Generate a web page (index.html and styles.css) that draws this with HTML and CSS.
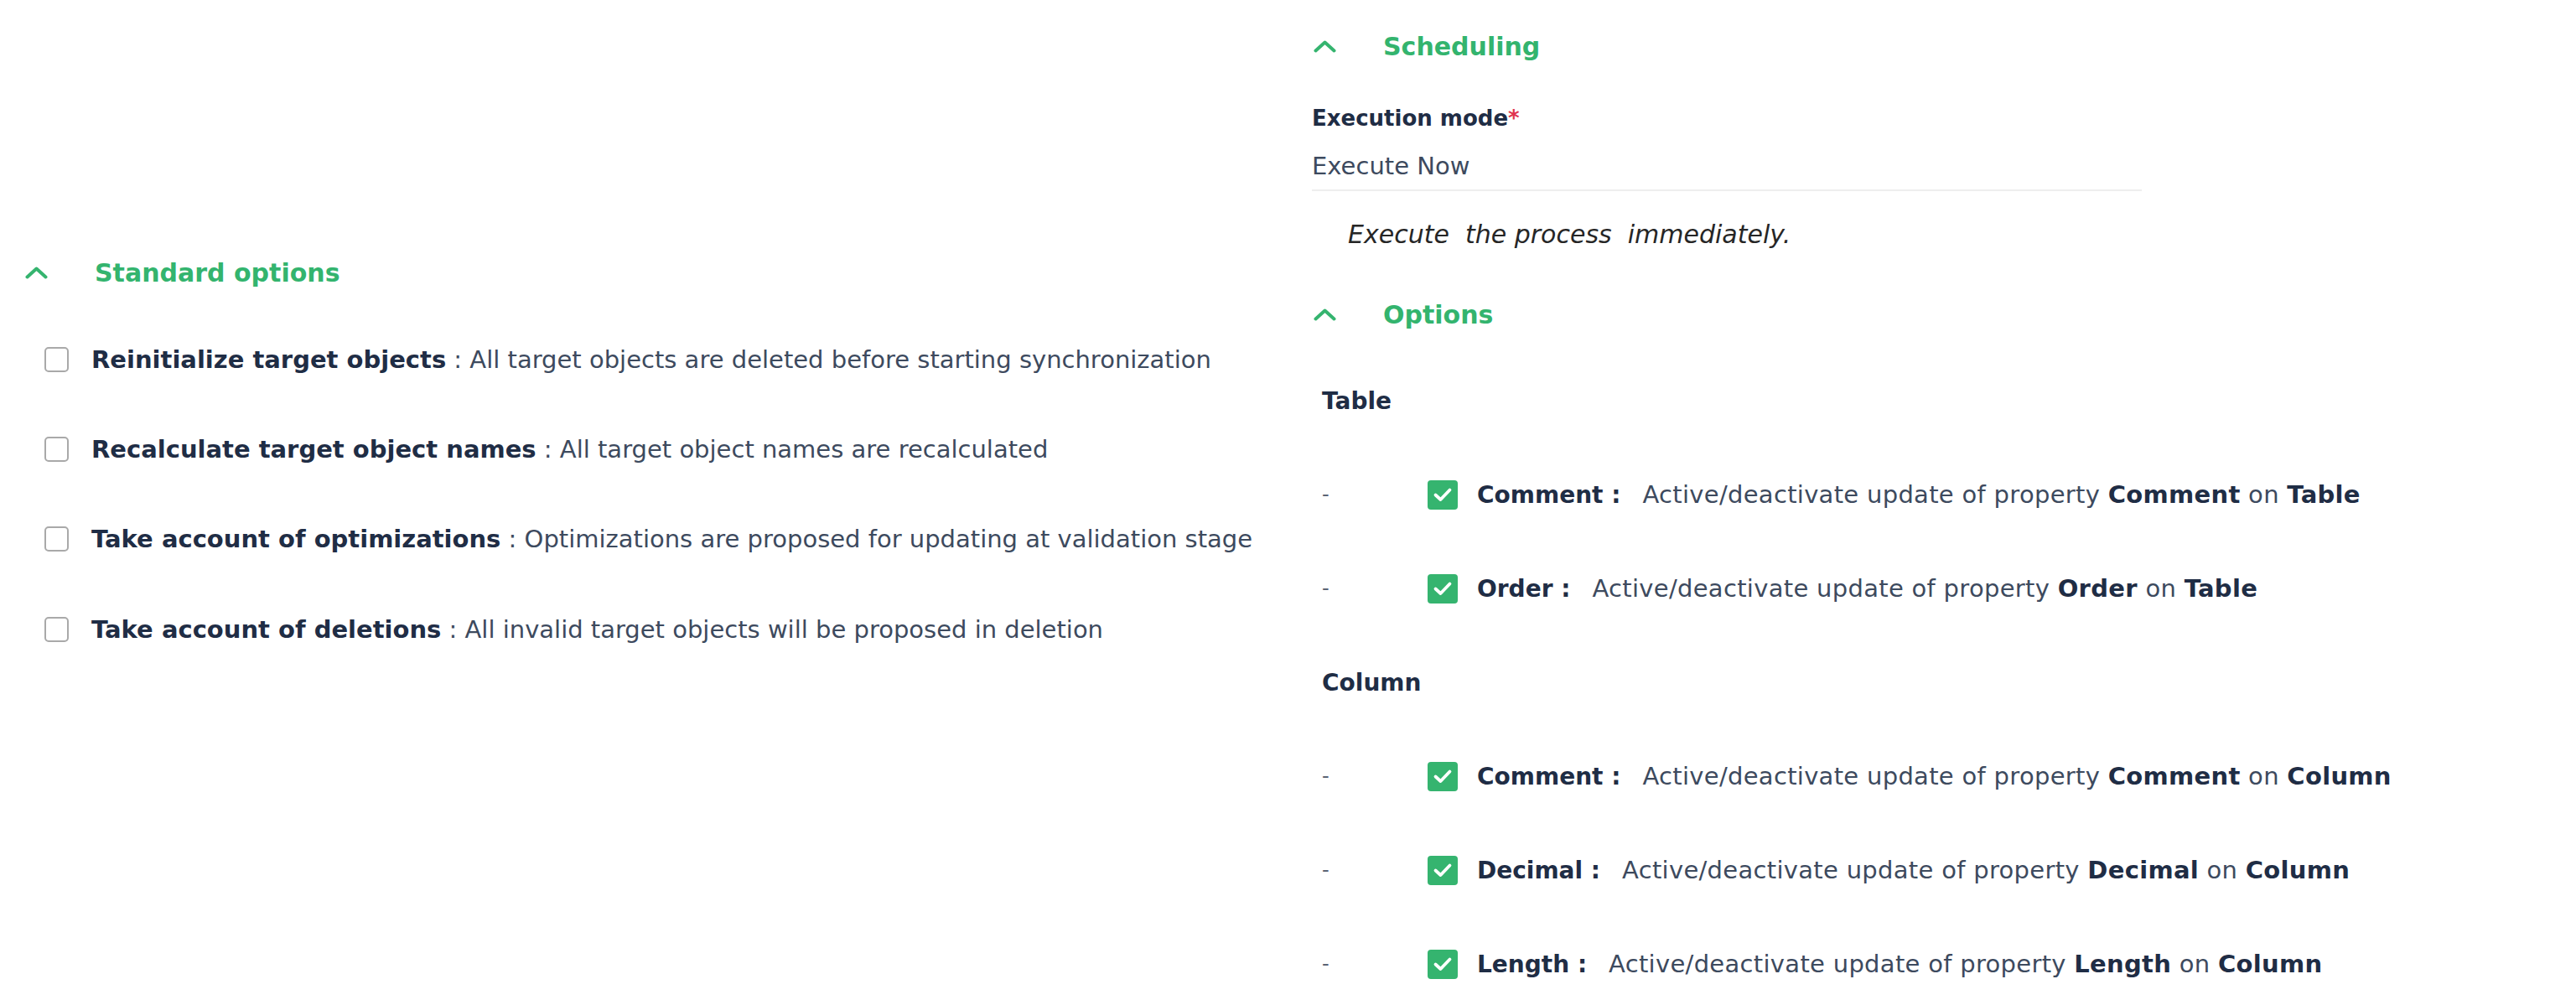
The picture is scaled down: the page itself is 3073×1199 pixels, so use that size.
FILE: index.html
```html
<!DOCTYPE html>
<html lang="en">
<head>
<meta charset="utf-8">
<title>Synchronization options</title>
<link rel="stylesheet" href="styles.css">
</head>
<body>
<div class="page">
  <section class="col col-left">
    <div class="sec-head sec-head-left">
      <svg class="chev" width="27" height="15" viewBox="0 0 27 15"><polyline points="2.5,12.5 13.5,2.5 24.5,12.5" fill="none" stroke="#35b46f" stroke-width="4" stroke-linecap="round" stroke-linejoin="round"/></svg>
      <span class="sec-title">Standard options</span>
    </div>
    <div class="std-list">
      <div class="std-row"><span class="box"></span><span class="std-text"><b class="lbl lbl-std">Reinitialize target objects</b> : All target objects are deleted before starting synchronization</span></div>
      <div class="std-row"><span class="box"></span><span class="std-text"><b class="lbl lbl-std">Recalculate target object names</b> : All target object names are recalculated</span></div>
      <div class="std-row"><span class="box"></span><span class="std-text"><b class="lbl lbl-std">Take account of optimizations</b> : Optimizations are proposed for updating at validation stage</span></div>
      <div class="std-row"><span class="box"></span><span class="std-text"><b class="lbl lbl-std">Take account of deletions</b> : All invalid target objects will be proposed in deletion</span></div>
    </div>
  </section>

  <section class="col col-right">
    <div class="sec-head sec-head-right">
      <svg class="chev" width="27" height="15" viewBox="0 0 27 15"><polyline points="2.5,12.5 13.5,2.5 24.5,12.5" fill="none" stroke="#35b46f" stroke-width="4" stroke-linecap="round" stroke-linejoin="round"/></svg>
      <span class="sec-title">Scheduling</span>
    </div>
    <div class="field-label">Execution mode<span class="req">*</span></div>
    <div class="field-value">Execute Now</div>
    <div class="hint">Execute&nbsp; the process&nbsp; immediately.</div>

    <div class="sec-head sec-head-right sec-options">
      <svg class="chev" width="27" height="15" viewBox="0 0 27 15"><polyline points="2.5,12.5 13.5,2.5 24.5,12.5" fill="none" stroke="#35b46f" stroke-width="4" stroke-linecap="round" stroke-linejoin="round"/></svg>
      <span class="sec-title">Options</span>
    </div>

    <div class="opt-list">
      <div class="group">Table</div>
      <div class="opt-row"><span class="dash">-</span><span class="cbox"><svg width="24" height="20" viewBox="0 0 24 20"><polyline points="3.5,10.5 9.5,16 20.5,4.5" fill="none" stroke="#fff" stroke-width="3.8" stroke-linecap="round" stroke-linejoin="round"/></svg></span><b class="lbl">Comment :</b><span class="desc">Active/deactivate update of property <b class="lbl lbl-desc">Comment</b> on <b class="lbl lbl-desc">Table</b></span></div>
      <div class="opt-row"><span class="dash">-</span><span class="cbox"><svg width="24" height="20" viewBox="0 0 24 20"><polyline points="3.5,10.5 9.5,16 20.5,4.5" fill="none" stroke="#fff" stroke-width="3.8" stroke-linecap="round" stroke-linejoin="round"/></svg></span><b class="lbl">Order :</b><span class="desc">Active/deactivate update of property <b class="lbl lbl-desc">Order</b> on <b class="lbl lbl-desc">Table</b></span></div>
      <div class="group">Column</div>
      <div class="opt-row"><span class="dash">-</span><span class="cbox"><svg width="24" height="20" viewBox="0 0 24 20"><polyline points="3.5,10.5 9.5,16 20.5,4.5" fill="none" stroke="#fff" stroke-width="3.8" stroke-linecap="round" stroke-linejoin="round"/></svg></span><b class="lbl">Comment :</b><span class="desc">Active/deactivate update of property <b class="lbl lbl-desc">Comment</b> on <b class="lbl lbl-desc">Column</b></span></div>
      <div class="opt-row"><span class="dash">-</span><span class="cbox"><svg width="24" height="20" viewBox="0 0 24 20"><polyline points="3.5,10.5 9.5,16 20.5,4.5" fill="none" stroke="#fff" stroke-width="3.8" stroke-linecap="round" stroke-linejoin="round"/></svg></span><b class="lbl">Decimal :</b><span class="desc">Active/deactivate update of property <b class="lbl lbl-desc">Decimal</b> on <b class="lbl lbl-desc">Column</b></span></div>
      <div class="opt-row"><span class="dash">-</span><span class="cbox"><svg width="24" height="20" viewBox="0 0 24 20"><polyline points="3.5,10.5 9.5,16 20.5,4.5" fill="none" stroke="#fff" stroke-width="3.8" stroke-linecap="round" stroke-linejoin="round"/></svg></span><b class="lbl">Length :</b><span class="desc">Active/deactivate update of property <b class="lbl lbl-desc">Length</b> on <b class="lbl lbl-desc">Column</b></span></div>
    </div>
  </section>
</div>
</body>
</html>
```

FILE: styles.css
```css
html, body {
  margin: 0;
  padding: 0;
  background: #ffffff;
}
body {
  font-family: "DejaVu Sans", Verdana, sans-serif;
  color: #3d4a5e;
  font-size: 29px;
  overflow: hidden;
}
.page {
  display: grid;
  grid-template-columns: 1565px 1fr;
  height: 1199px;
}
.col {
  display: flex;
  flex-direction: column;
}
.col-left {
  padding-top: 305px;
}
.sec-head {
  display: flex;
  align-items: center;
  height: 40px;
}
.sec-head-left {
  padding-left: 30px;
}
.sec-head-right {
  padding-left: 2px;
  margin-top: 35px;
}
.chev {
  flex: none;
  margin-right: 56px;
}
.sec-title {
  font-weight: bold;
  font-size: 30px;
  color: #33b46e;
}
.std-list {
  display: flex;
  flex-direction: column;
  margin-top: 30px;
}
.std-row {
  display: flex;
  align-items: center;
  height: 107.3px;
  padding-left: 53px;
}
.box {
  flex: none;
  width: 25px;
  height: 26px;
  border: 2px solid #a9a9a9;
  border-radius: 5px;
  background: #fff;
  margin-right: 27px;
}
.std-text {
  white-space: nowrap;
}
.lbl {
  font-weight: bold;
  font-size: 28px;
  color: #1f2d45;
  letter-spacing: 0;
}
.lbl-std {
  font-size: 29px;
}
.lbl-desc {
  font-size: 29px;
  letter-spacing: 0.3px;
}
.field-label {
  font-weight: bold;
  font-size: 26px;
  color: #1f2d45;
  height: 30px;
  line-height: 30px;
  margin-top: 51px;
}
.req {
  color: #e0344f;
}
.field-value {
  font-size: 29px;
  color: #3d4a5e;
  height: 30px;
  line-height: 30px;
  margin-top: 27px;
  padding-bottom: 13px;
  width: 990px;
  border-bottom: 2px solid #eeeeee;
}
.hint {
  font-style: italic;
  font-size: 30px;
  color: #262626;
  height: 30px;
  line-height: 30px;
  margin-top: 37px;
  padding-left: 43px;
}
.sec-options {
  margin-top: 60px;
}
.opt-list {
  display: flex;
  flex-direction: column;
  margin-top: 27px;
}
.group {
  display: flex;
  align-items: center;
  height: 112px;
  padding-left: 12px;
  font-weight: bold;
  font-size: 28px;
  color: #1f2d45;
}
.opt-row {
  display: flex;
  align-items: center;
  height: 112px;
  padding-left: 12px;
  white-space: nowrap;
}
.dash {
  width: 126px;
  color: #5b6474;
  font-size: 24px;
}
.cbox {
  flex: none;
  width: 36px;
  height: 35px;
  border-radius: 4px;
  background: #35b46f;
  display: flex;
  align-items: center;
  justify-content: center;
  margin-right: 23px;
}
.desc {
  margin-left: 26px;
  letter-spacing: 0.3px;
}
```
